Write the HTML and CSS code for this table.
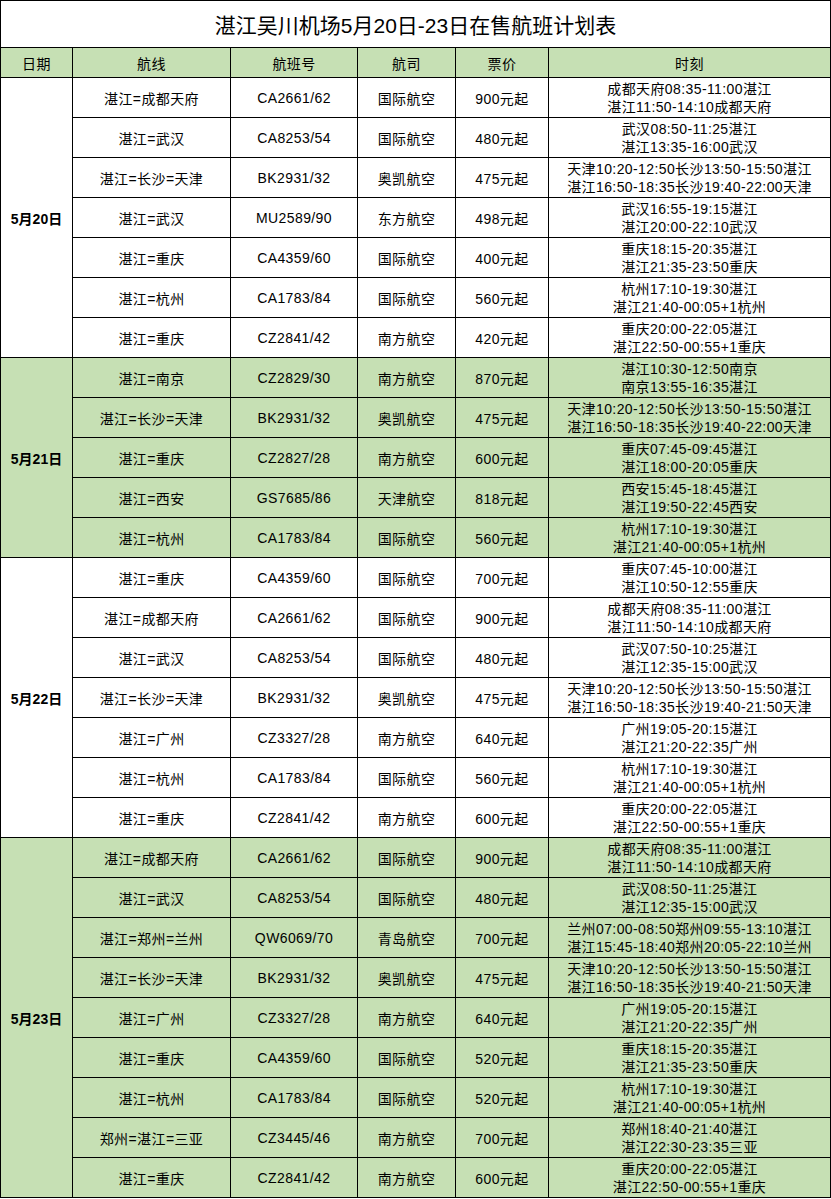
FILE: index.html
```html
<!DOCTYPE html>
<html lang="zh-CN">
<head>
<meta charset="utf-8">
<link rel="stylesheet" href="styles.css">
</head>
<body>
<table class="sched">
<colgroup>
<col class="c-date"><col class="c-route"><col class="c-no"><col class="c-air"><col class="c-price"><col class="c-time">
</colgroup>
<thead>
<tr class="title"><th colspan="6">湛江吴川机场5月20日-23日在售航班计划表</th></tr>
<tr class="head"><th>日期</th><th>航线</th><th>航班号</th><th>航司</th><th>票价</th><th>时刻</th></tr>
</thead>
<tbody class="white">
<tr><td class="date" rowspan="7">5月20日</td><td>湛江=成都天府</td><td>CA2661/62</td><td>国际航空</td><td>900元起</td><td class="time">成都天府08:35-11:00湛江<br>湛江11:50-14:10成都天府</td></tr>
<tr><td>湛江=武汉</td><td>CA8253/54</td><td>国际航空</td><td>480元起</td><td class="time">武汉08:50-11:25湛江<br>湛江13:35-16:00武汉</td></tr>
<tr><td>湛江=长沙=天津</td><td>BK2931/32</td><td>奥凯航空</td><td>475元起</td><td class="time">天津10:20-12:50长沙13:50-15:50湛江<br>湛江16:50-18:35长沙19:40-22:00天津</td></tr>
<tr><td>湛江=武汉</td><td>MU2589/90</td><td>东方航空</td><td>498元起</td><td class="time">武汉16:55-19:15湛江<br>湛江20:00-22:10武汉</td></tr>
<tr><td>湛江=重庆</td><td>CA4359/60</td><td>国际航空</td><td>400元起</td><td class="time">重庆18:15-20:35湛江<br>湛江21:35-23:50重庆</td></tr>
<tr><td>湛江=杭州</td><td>CA1783/84</td><td>国际航空</td><td>560元起</td><td class="time">杭州17:10-19:30湛江<br>湛江21:40-00:05+1杭州</td></tr>
<tr><td>湛江=重庆</td><td>CZ2841/42</td><td>南方航空</td><td>420元起</td><td class="time">重庆20:00-22:05湛江<br>湛江22:50-00:55+1重庆</td></tr>
</tbody>
<tbody class="green">
<tr><td class="date" rowspan="5">5月21日</td><td>湛江=南京</td><td>CZ2829/30</td><td>南方航空</td><td>870元起</td><td class="time">湛江10:30-12:50南京<br>南京13:55-16:35湛江</td></tr>
<tr><td>湛江=长沙=天津</td><td>BK2931/32</td><td>奥凯航空</td><td>475元起</td><td class="time">天津10:20-12:50长沙13:50-15:50湛江<br>湛江16:50-18:35长沙19:40-22:00天津</td></tr>
<tr><td>湛江=重庆</td><td>CZ2827/28</td><td>南方航空</td><td>600元起</td><td class="time">重庆07:45-09:45湛江<br>湛江18:00-20:05重庆</td></tr>
<tr><td>湛江=西安</td><td>GS7685/86</td><td>天津航空</td><td>818元起</td><td class="time">西安15:45-18:45湛江<br>湛江19:50-22:45西安</td></tr>
<tr><td>湛江=杭州</td><td>CA1783/84</td><td>国际航空</td><td>560元起</td><td class="time">杭州17:10-19:30湛江<br>湛江21:40-00:05+1杭州</td></tr>
</tbody>
<tbody class="white">
<tr><td class="date" rowspan="7">5月22日</td><td>湛江=重庆</td><td>CA4359/60</td><td>国际航空</td><td>700元起</td><td class="time">重庆07:45-10:00湛江<br>湛江10:50-12:55重庆</td></tr>
<tr><td>湛江=成都天府</td><td>CA2661/62</td><td>国际航空</td><td>900元起</td><td class="time">成都天府08:35-11:00湛江<br>湛江11:50-14:10成都天府</td></tr>
<tr><td>湛江=武汉</td><td>CA8253/54</td><td>国际航空</td><td>480元起</td><td class="time">武汉07:50-10:25湛江<br>湛江12:35-15:00武汉</td></tr>
<tr><td>湛江=长沙=天津</td><td>BK2931/32</td><td>奥凯航空</td><td>475元起</td><td class="time">天津10:20-12:50长沙13:50-15:50湛江<br>湛江16:50-18:35长沙19:40-21:50天津</td></tr>
<tr><td>湛江=广州</td><td>CZ3327/28</td><td>南方航空</td><td>640元起</td><td class="time">广州19:05-20:15湛江<br>湛江21:20-22:35广州</td></tr>
<tr><td>湛江=杭州</td><td>CA1783/84</td><td>国际航空</td><td>560元起</td><td class="time">杭州17:10-19:30湛江<br>湛江21:40-00:05+1杭州</td></tr>
<tr><td>湛江=重庆</td><td>CZ2841/42</td><td>南方航空</td><td>600元起</td><td class="time">重庆20:00-22:05湛江<br>湛江22:50-00:55+1重庆</td></tr>
</tbody>
<tbody class="green">
<tr><td class="date" rowspan="9">5月23日</td><td>湛江=成都天府</td><td>CA2661/62</td><td>国际航空</td><td>900元起</td><td class="time">成都天府08:35-11:00湛江<br>湛江11:50-14:10成都天府</td></tr>
<tr><td>湛江=武汉</td><td>CA8253/54</td><td>国际航空</td><td>480元起</td><td class="time">武汉08:50-11:25湛江<br>湛江12:35-15:00武汉</td></tr>
<tr><td>湛江=郑州=兰州</td><td>QW6069/70</td><td>青岛航空</td><td>700元起</td><td class="time">兰州07:00-08:50郑州09:55-13:10湛江<br>湛江15:45-18:40郑州20:05-22:10兰州</td></tr>
<tr><td>湛江=长沙=天津</td><td>BK2931/32</td><td>奥凯航空</td><td>475元起</td><td class="time">天津10:20-12:50长沙13:50-15:50湛江<br>湛江16:50-18:35长沙19:40-21:50天津</td></tr>
<tr><td>湛江=广州</td><td>CZ3327/28</td><td>南方航空</td><td>640元起</td><td class="time">广州19:05-20:15湛江<br>湛江21:20-22:35广州</td></tr>
<tr><td>湛江=重庆</td><td>CA4359/60</td><td>国际航空</td><td>520元起</td><td class="time">重庆18:15-20:35湛江<br>湛江21:35-23:50重庆</td></tr>
<tr><td>湛江=杭州</td><td>CA1783/84</td><td>国际航空</td><td>520元起</td><td class="time">杭州17:10-19:30湛江<br>湛江21:40-00:05+1杭州</td></tr>
<tr><td>郑州=湛江=三亚</td><td>CZ3445/46</td><td>南方航空</td><td>700元起</td><td class="time">郑州18:40-21:40湛江<br>湛江22:30-23:35三亚</td></tr>
<tr><td>湛江=重庆</td><td>CZ2841/42</td><td>南方航空</td><td>600元起</td><td class="time">重庆20:00-22:05湛江<br>湛江22:50-00:55+1重庆</td></tr>
</tbody>
</table>
</body>
</html>
```
FILE: styles.css
```css
html, body {
  margin: 0;
  padding: 0;
  background: #ffffff;
}
body {
  font-family: "Liberation Sans", "Noto Sans CJK SC", sans-serif;
  font-size: 14px;
  color: #000;
}
.sched {
  border-collapse: collapse;
  table-layout: fixed;
  width: 830px;
}
.c-date { width: 72px; }
.c-route { width: 158px; }
.c-no { width: 127px; }
.c-air { width: 98px; }
.c-price { width: 93px; }
.c-time { width: 282px; }
.sched th, .sched td {
  border: 1px solid #000;
  padding: 0;
  text-align: center;
  vertical-align: middle;
  font-weight: normal;
  white-space: nowrap;
  overflow: hidden;
  letter-spacing: 0.4px;
}
.title th {
  height: 46px;
  font-size: 21px;
  letter-spacing: 0;
  background: #ffffff;
}
.head th {
  height: 29px;
  background: #c6e0b4;
  font-size: 14px;
}
.sched tbody td {
  height: 39px;
}
.sched td.time {
  line-height: 18px;
  letter-spacing: 0.4px;
}
.sched td.date {
  font-weight: bold;
  font-size: 14px;
  letter-spacing: 0;
}
.white td { background: #ffffff; }
.green td { background: #c6e0b4; }
```
